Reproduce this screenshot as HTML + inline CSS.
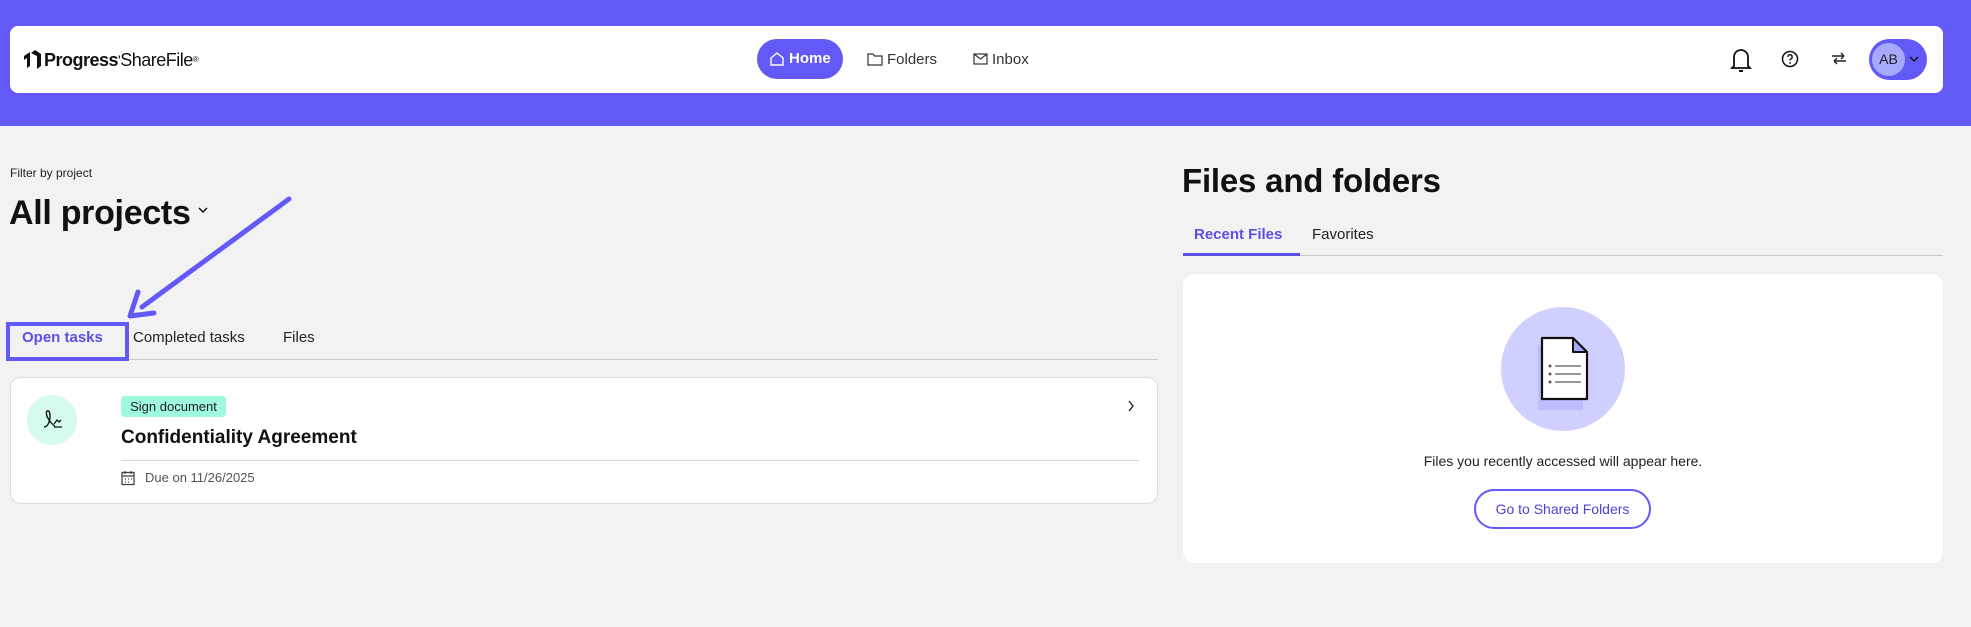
<!DOCTYPE html>
<html><head><meta charset="utf-8"><style>
*{margin:0;padding:0;box-sizing:border-box}
body{width:1971px;height:627px;background:#f2f2f2;font-family:"Liberation Sans",sans-serif;color:#111;position:relative;overflow:hidden}
.a{position:absolute}
</style></head><body>
<div class="a" style="left:0;top:0;width:1971px;height:126px;background:#6359f6"></div>
<div class="a" style="left:10px;top:26px;width:1933px;height:67px;background:#fff;border-radius:8px"></div>
<svg class="a" style="left:22px;top:48px" width="20" height="22" viewBox="0 0 20 22"><path d="M2 8l6-4v14l-3 2V10L2 12z M9 5l4-3 6 4v12l-4 3V8z" fill="#111"/></svg>
<div class="a" style="left:44px;top:49px;font-size:18px;letter-spacing:-0.5px;line-height:22px"><b style="font-weight:700">Progress</b><span style="font-size:14px;vertical-align:top">'</span>ShareFile<span style="font-size:8px;vertical-align:top">®</span></div>
<div class="a" style="left:757px;top:39px;width:86px;height:40px;background:#6359f6;border-radius:20px;color:#fff;font-size:15px;font-weight:700;line-height:40px;padding-left:32px">Home</div>
<svg class="a" style="left:769px;top:51px" width="16" height="16" viewBox="0 0 16 16"><path d="M2 7l6-5 6 5v7H2z" fill="none" stroke="#fff" stroke-width="1.4"/></svg>
<svg class="a" style="left:867px;top:52px" width="16" height="14" viewBox="0 0 16 14"><path d="M1 2h5l1.5 2H15v9H1z" fill="none" stroke="#333" stroke-width="1.2"/></svg>
<div class="a" style="left:887px;top:51px;font-size:15px;color:#333">Folders</div>
<svg class="a" style="left:973px;top:53px" width="15" height="12" viewBox="0 0 15 12"><rect x="1" y="1" width="13" height="10" fill="none" stroke="#333" stroke-width="1.2"/><path d="M1 1l6.5 5L14 1" fill="none" stroke="#333" stroke-width="1.2"/></svg>
<div class="a" style="left:992px;top:51px;font-size:15px;color:#333">Inbox</div>
<svg class="a" style="left:1730px;top:47px" width="22" height="26" viewBox="0 0 22 26"><path d="M4 19V10a7 7 0 0114 0v9l2 2H2z" fill="none" stroke="#111" stroke-width="1.8"/><path d="M9 24h4" stroke="#111" stroke-width="2"/></svg>
<svg class="a" style="left:1781px;top:50px" width="18" height="18" viewBox="0 0 18 18"><circle cx="9" cy="9" r="7.5" fill="none" stroke="#111" stroke-width="1.5"/><path d="M6.8 7a2.2 2.2 0 114 1.2c-1 .8-1.8 1-1.8 2.3" fill="none" stroke="#111" stroke-width="1.4"/><circle cx="9" cy="13" r=".9" fill="#111"/></svg>
<svg class="a" style="left:1830px;top:51px" width="18" height="16" viewBox="0 0 18 16"><path d="M4 10h12M4 10l3-3M4 10l3 3M14 5H2M14 5l-3-3M14 5l-3 3" fill="none" stroke="#222" stroke-width="1.4"/></svg>
<div class="a" style="left:1869px;top:39px;width:58px;height:41px;background:#6359f6;border-radius:21px"></div>
<div class="a" style="left:1872px;top:43px;width:33px;height:33px;background:#a7a9ff;border-radius:50%;font-size:14px;line-height:33px;text-align:center;color:#222">AB</div>
<svg class="a" style="left:1909px;top:56px" width="10" height="7" viewBox="0 0 10 7"><path d="M1 1l4 4 4-4" fill="none" stroke="#111" stroke-width="1.4"/></svg>
<div class="a" style="left:10px;top:166px;font-size:12px;color:#222">Filter by project</div>
<div class="a" style="left:9px;top:194px;font-size:34px;font-weight:700;letter-spacing:-0.3px">All projects</div>
<svg class="a" style="left:198px;top:207px" width="10" height="7" viewBox="0 0 10 7"><path d="M1 1l4 4 4-4" fill="none" stroke="#111" stroke-width="1.5"/></svg>
<svg class="a" style="left:0;top:0" width="400" height="400"><line x1="289" y1="199" x2="142" y2="307" stroke="#6359f6" stroke-width="5" stroke-linecap="round"/><path d="M130 316l8-24 M130 316l24-3" stroke="#6359f6" stroke-width="5" stroke-linecap="round" fill="none"/></svg>
<div class="a" style="left:10px;top:359px;width:1148px;height:1px;background:#c8c8c8"></div>
<div class="a" style="left:6px;top:322px;width:123px;height:39px;border:4px solid #6359f6"></div>
<div class="a" style="left:22px;top:329px;font-size:15px;font-weight:700;color:#5a50e8">Open tasks</div>
<div class="a" style="left:133px;top:329px;font-size:15px;color:#222">Completed tasks</div>
<div class="a" style="left:283px;top:329px;font-size:15px;color:#222">Files</div>
<div class="a" style="left:10px;top:377px;width:1148px;height:127px;background:#fff;border:1px solid #ddd;border-radius:11px"></div>
<div class="a" style="left:27px;top:395px;width:50px;height:50px;background:#d4fbee;border-radius:50%"></div>
<svg class="a" style="left:40px;top:407px" width="26" height="26" viewBox="0 0 26 26"><path d="M4 20c4 0 6-6 6-11S8 3 7 4s-1 5 2 9 5 6 6 6" fill="none" stroke="#111" stroke-width="1.4"/><path d="M14 17l3-4 2 2 2-2M14 20h8" fill="none" stroke="#111" stroke-width="1.3"/></svg>
<div class="a" style="left:121px;top:396px;width:105px;height:21px;background:#9ef9de;border-radius:4px;font-size:13px;line-height:21px;text-align:center;color:#222">Sign document</div>
<div class="a" style="left:121px;top:427px;font-size:19px;font-weight:700">Confidentiality Agreement</div>
<svg class="a" style="left:1127px;top:400px" width="8" height="12" viewBox="0 0 8 12"><path d="M2 1l4 5-4 5" fill="none" stroke="#222" stroke-width="1.4"/></svg>
<div class="a" style="left:121px;top:460px;width:1018px;height:1px;background:#d8d8d8"></div>
<svg class="a" style="left:121px;top:470px" width="14" height="16" viewBox="0 0 14 16"><rect x="1" y="2.5" width="12" height="12" fill="none" stroke="#444" stroke-width="1.3"/><path d="M1 6h12M4 1v3M10 1v3" stroke="#444" stroke-width="1.3"/><path d="M4 9h1M7 9h1M10 9h1M4 12h1M7 12h1" stroke="#444" stroke-width="1.2"/></svg>
<div class="a" style="left:145px;top:470px;font-size:13px;color:#555">Due on 11/26/2025</div>
<div class="a" style="left:1182px;top:162px;font-size:33px;font-weight:700;letter-spacing:-0.2px">Files and folders</div>
<div class="a" style="left:1183px;top:255px;width:760px;height:1px;background:#c8c8c8"></div>
<div class="a" style="left:1183px;top:253px;width:117px;height:3px;background:#5a50e8"></div>
<div class="a" style="left:1194px;top:226px;font-size:15px;font-weight:700;color:#5a50e8">Recent Files</div>
<div class="a" style="left:1312px;top:226px;font-size:15px;color:#222">Favorites</div>
<div class="a" style="left:1183px;top:274px;width:760px;height:289px;background:#fff;border-radius:11px"></div>
<div class="a" style="left:1501px;top:307px;width:124px;height:124px;background:#d0d0ff;border-radius:50%"></div>
<svg class="a" style="left:1535px;top:330px" width="60" height="90" viewBox="0 0 60 80"><rect x="3" y="10" width="45" height="65" fill="#bcbcff"/><path d="M7 3h31l14 14v47H7z" fill="#fff" stroke="#111" stroke-width="2.2" stroke-linejoin="round"/><path d="M38 3v14h14z" fill="#a8a8ff" stroke="#111" stroke-width="2" stroke-linejoin="round"/><g stroke="#777" stroke-width="1.5"><path d="M20 31h26M20 39h26M20 47h26"/></g><g fill="#555"><circle cx="15" cy="31" r="1.5"/><circle cx="15" cy="39" r="1.5"/><circle cx="15" cy="47" r="1.5"/></g></svg>
<div class="a" style="left:1183px;top:453px;width:760px;text-align:center;font-size:14px;color:#222">Files you recently accessed will appear here.</div>
<div class="a" style="left:1474px;top:489px;width:177px;height:40px;border:2px solid #6359f6;border-radius:20px;text-align:center;line-height:36px;font-size:14px;color:#4a40d8">Go to Shared Folders</div>
</body></html>
